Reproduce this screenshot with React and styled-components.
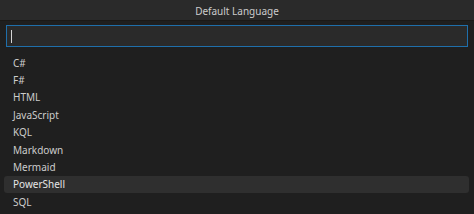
import styled, { createGlobalStyle } from "styled-components";

const Global = createGlobalStyle`
  html, body {
    margin: 0;
    padding: 0;
    background: #1f1f1f;
  }
  body {
    font-family: "Noto Sans", "Open Sans", sans-serif;
  }
`;

const Picker = styled.div`
  width: 474px;
  height: 214px;
  background: #1f1f1f;
  overflow: hidden;
  display: flex;
  flex-direction: column;
`;

const TitleBar = styled.div`
  height: 21px;
  background: #2a2a2a;
  border-bottom: 1px solid #1b1917;
  display: flex;
  align-items: center;
  justify-content: center;
  color: #cccccc;
  font-size: 10px;
  padding-top: 1px;
  box-sizing: border-box;
`;

const InputWrap = styled.div`
  padding: 4px 6px 0 6px;
`;

const Input = styled.div`
  height: 20px;
  border: 1px solid #1f6fab;
  background: #2a2a2a;
  display: flex;
  align-items: center;
  padding-left: 4px;
`;

const Caret = styled.span`
  width: 1px;
  height: 13px;
  background: #d4d4d4;
`;

const List = styled.div`
  padding: 7px 5px 0 4px;
  display: flex;
  flex-direction: column;
`;

const Row = styled.div`
  height: 17.4px;
  display: flex;
  align-items: center;
  padding-left: 9px;
  border-radius: 3px;
  font-size: 10px;
  background: ${(p) => (p.active ? "#2f2f2f" : "transparent")};
  color: ${(p) => (p.active ? "#e6e6e6" : "#cccccc")};
`;

const languages = [
  "C#",
  "F#",
  "HTML",
  "JavaScript",
  "KQL",
  "Markdown",
  "Mermaid",
  "PowerShell",
  "SQL",
];

function App() {
  return (
    <>
      <Global />
      <Picker>
        <TitleBar>Default Language</TitleBar>
        <InputWrap>
          <Input>
            <Caret />
          </Input>
        </InputWrap>
        <List>
          {languages.map((l) => (
            <Row key={l} active={l === "PowerShell"}>
              {l}
            </Row>
          ))}
        </List>
      </Picker>
    </>
  );
}

export default App;
